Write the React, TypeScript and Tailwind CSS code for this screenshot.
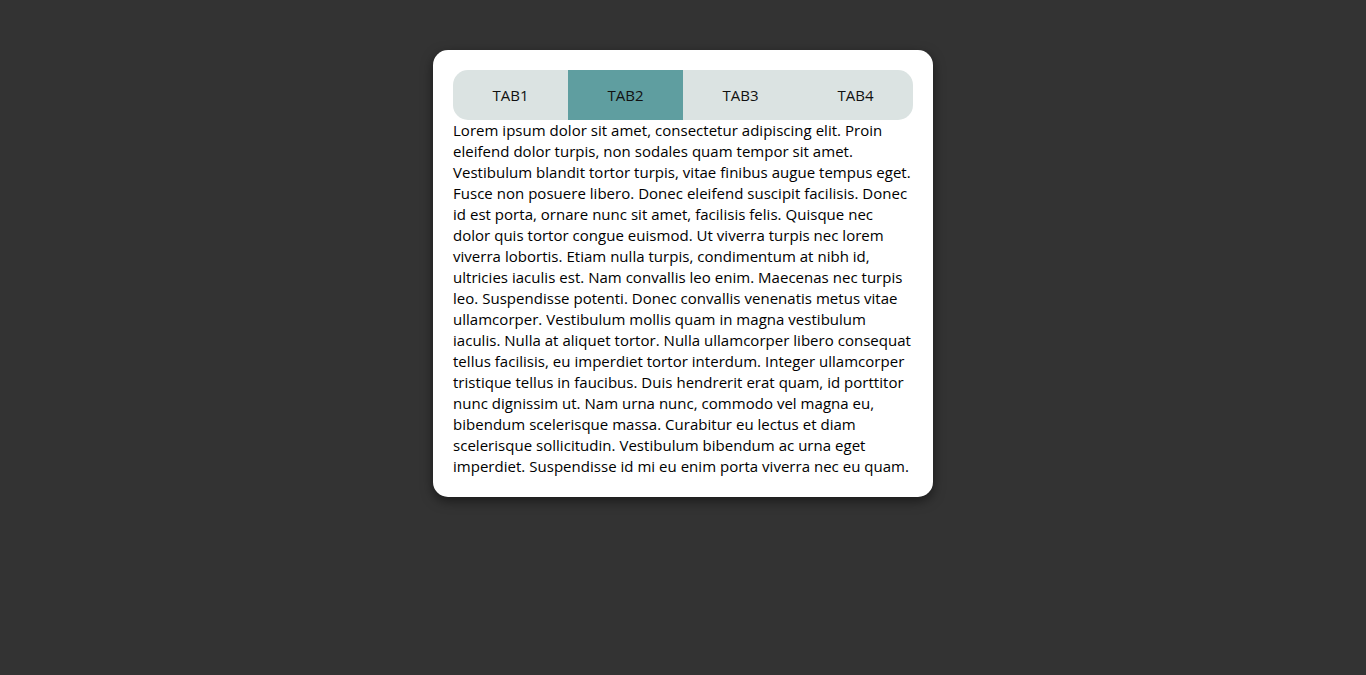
import React, { useState } from "react";

const TABS = ["TAB1", "TAB2", "TAB3", "TAB4"];

const LOREM =
  "Lorem ipsum dolor sit amet, consectetur adipiscing elit. Proin eleifend dolor turpis, non sodales quam tempor sit amet. Vestibulum blandit tortor turpis, vitae finibus augue tempus eget. Fusce non posuere libero. Donec eleifend suscipit facilisis. Donec id est porta, ornare nunc sit amet, facilisis felis. Quisque nec dolor quis tortor congue euismod. Ut viverra turpis nec lorem viverra lobortis. Etiam nulla turpis, condimentum at nibh id, ultricies iaculis est. Nam convallis leo enim. Maecenas nec turpis leo. Suspendisse potenti. Donec convallis venenatis metus vitae ullamcorper. Vestibulum mollis quam in magna vestibulum iaculis. Nulla at aliquet tortor. Nulla ullamcorper libero consequat tellus facilisis, eu imperdiet tortor interdum. Integer ullamcorper tristique tellus in faucibus. Duis hendrerit erat quam, id porttitor nunc dignissim ut. Nam urna nunc, commodo vel magna eu, bibendum scelerisque massa. Curabitur eu lectus et diam scelerisque sollicitudin. Vestibulum bibendum ac urna eget imperdiet. Suspendisse id mi eu enim porta viverra nec eu quam.";

const App: React.FC = () => {
  const [active, setActive] = useState(1);

  return (
    <div className="min-h-screen bg-[#333333] flex justify-center pt-[50px] font-['Open_Sans','Liberation_Sans',sans-serif]">
      <div className="w-[500px] self-start bg-white rounded-[15px] p-5 shadow-[0_4px_12px_rgba(0,0,0,0.5)]">
        <div className="flex h-[50px] bg-[#dbe3e2] rounded-[15px] overflow-hidden">
          {TABS.map((tab, index) => (
            <button
              key={tab}
              onClick={() => setActive(index)}
              className={`flex-1 flex items-center justify-center text-[15px] text-[#111] ${
                active === index ? "bg-[#5f9ea0]" : "bg-transparent"
              }`}
            >
              {tab}
            </button>
          ))}
        </div>
        <p className="text-[15px] leading-[21px] tracking-[0.025px] text-black">{LOREM}</p>
      </div>
    </div>
  );
};

export default App;
